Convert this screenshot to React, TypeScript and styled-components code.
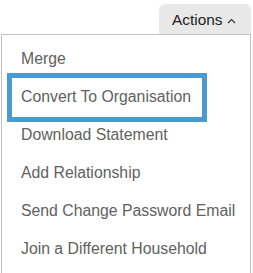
import styled, { createGlobalStyle } from "styled-components";

const GlobalStyle = createGlobalStyle`
    html, body {
        margin: 0;
        padding: 0;
        background: #fff;
    }
    body {
        font-family: "Liberation Sans", Arial, sans-serif;
    }
`

const Page = styled.div`
    padding: 4px 2px 0 1px;
`
const Dropdown = styled.div`
    width: 250px;
    display: flex;
    flex-direction: column;
`
const Toggle = styled.button`
    align-self: flex-end;
    height: 30px;
    width: 92px;
    padding: 2px 0 0 13px;
    display: flex;
    align-items: center;
    gap: 5px;
    border: none;
    border-radius: 6px 6px 0 0;
    background-color: #e8e8e8;
    color: #222;
    font-family: "Liberation Sans", Arial, sans-serif;
    font-size: 15.4px;
    cursor: pointer;
    svg {
        margin-top: 2px;
    }
`
const Menu = styled.ul`
    list-style: none;
    margin: 0;
    padding: 5px 0 0 19px;
    height: 234px;
    border: 1px solid #c3c3c3;
    border-bottom: none;
`
const Item = styled.li<{ $focused?: boolean }>`
    position: relative;
    height: 38px;
    display: flex;
    align-items: center;
    color: #616161;
    font-size: 15.8px;
    cursor: pointer;
    &::after {
        content: "";
        display: ${(p) => (p.$focused ? "block" : "none")};
        position: absolute;
        left: -14px;
        top: -5px;
        width: 200px;
        height: 49px;
        box-sizing: border-box;
        border: 5px solid #4a9bd1;
    }
`

const items = [
    "Merge",
    "Convert To Organisation",
    "Download Statement",
    "Add Relationship",
    "Send Change Password Email",
    "Join a Different Household",
]

export default function App() {
    return (
        <Page>
            <GlobalStyle />
            <Dropdown>
                <Toggle>
                    Actions
                    <svg width="9" height="6" viewBox="0 0 9 6" fill="none">
                        <path d="M1 5L4.5 1.5L8 5" stroke="#333" strokeWidth="1.2" />
                    </svg>
                </Toggle>
                <Menu>
                    {items.map((label, i) => (
                        <Item key={label} $focused={i === 1}>{label}</Item>
                    ))}
                </Menu>
            </Dropdown>
        </Page>
    )
}
